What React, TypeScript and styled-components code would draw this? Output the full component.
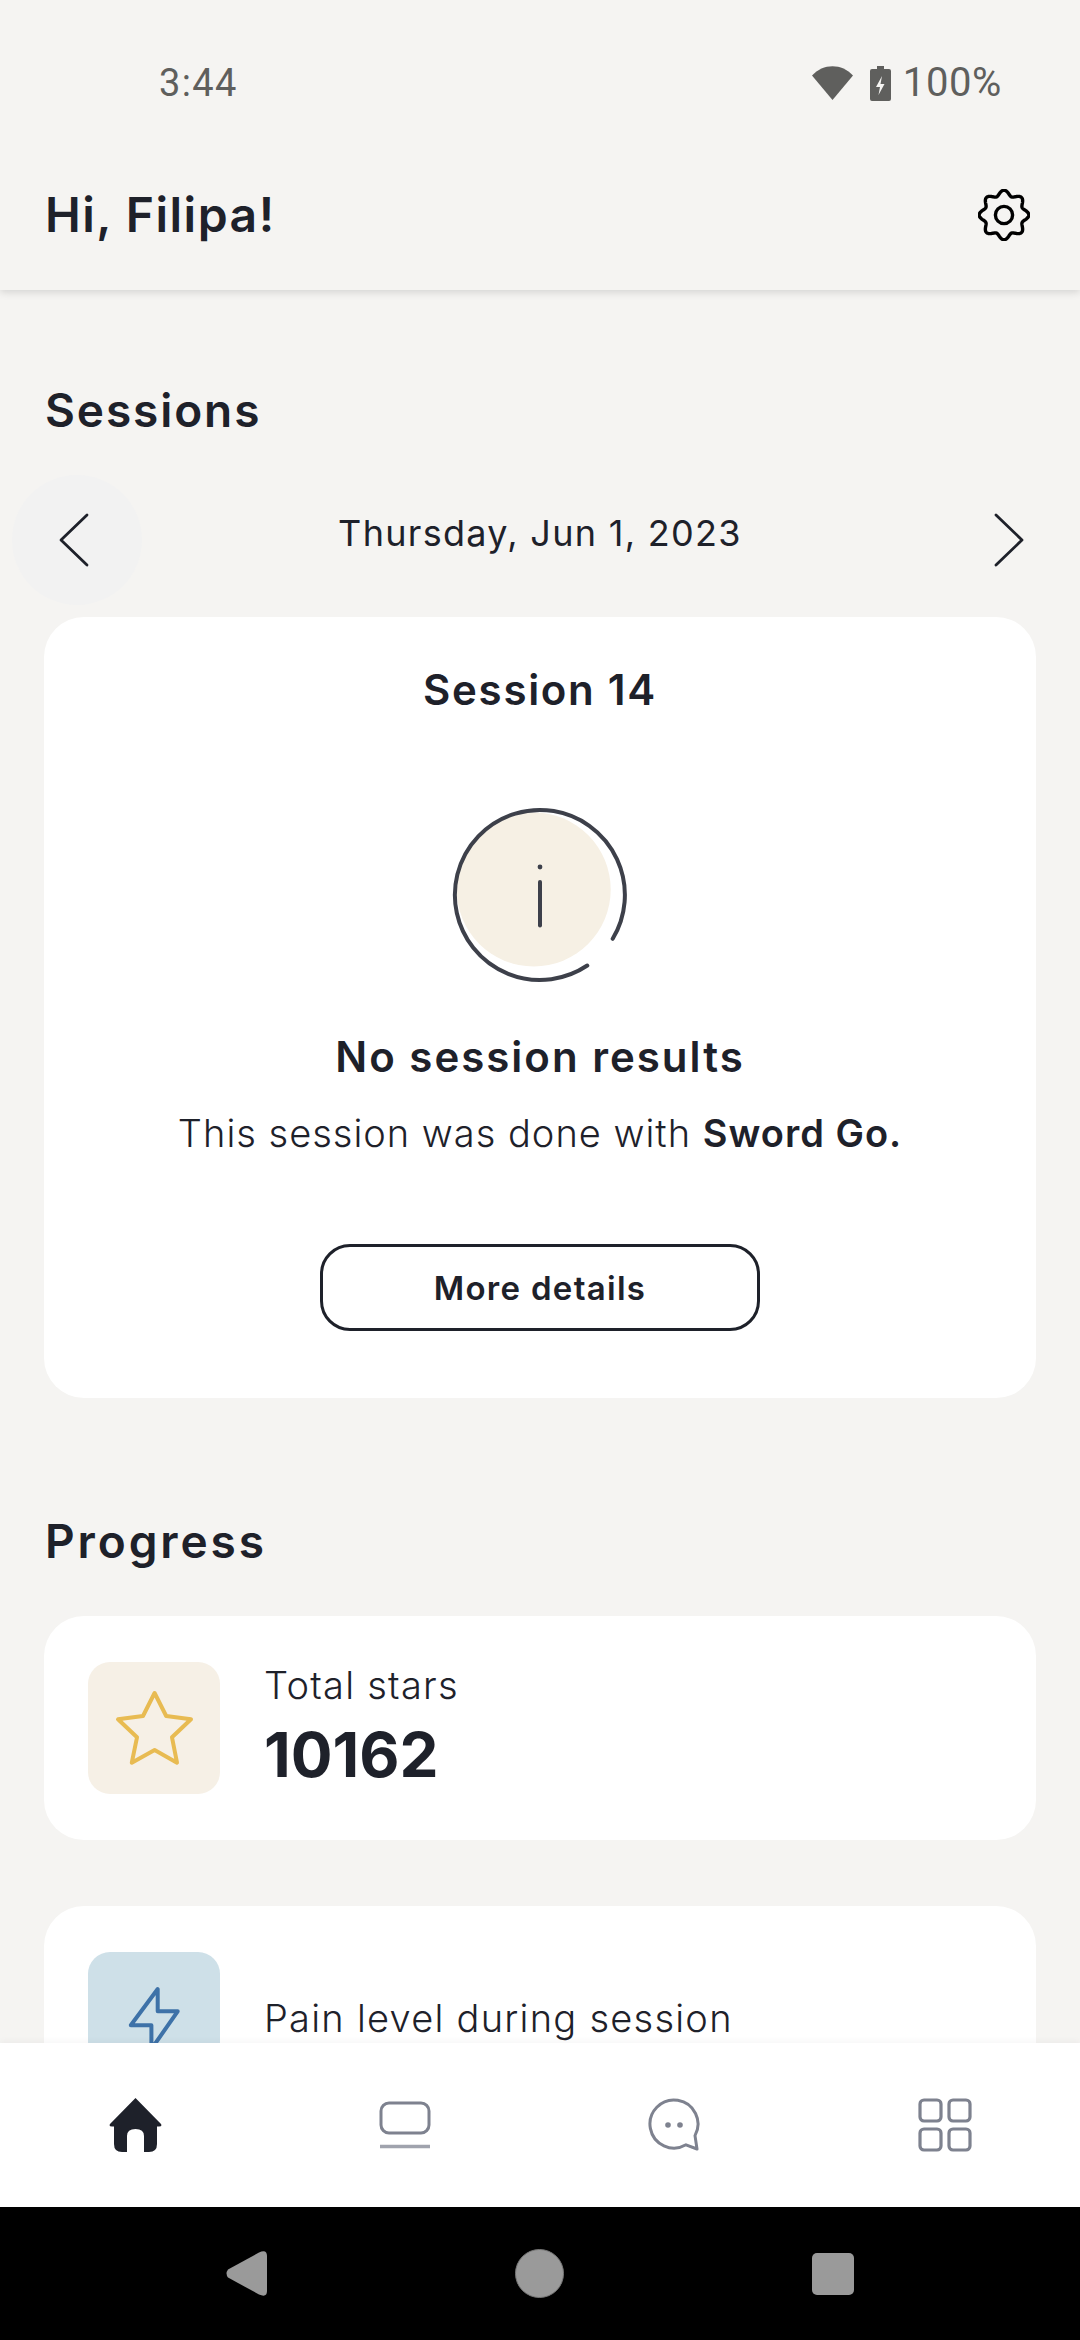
import { FC } from "react";
import styled, { createGlobalStyle } from "styled-components";

const colors = {
  page: "#f5f4f2",
  ink: "#1e212a",
  navGray: "#7e828f",
  status: "#5f5f5d",
  sysGray: "#9a9a9a",
};

const gearPath = () => {
  const points: string[] = [];
  for (let i = 0; i < 240; i++) {
    const a = (i / 240) * Math.PI * 2;
    const r = 22.2 + 2.6 * Math.cos(8 * a);
    const x = 26 + r * Math.sin(a);
    const y = 26 - r * Math.cos(a);
    points.push(`${x.toFixed(2)} ${y.toFixed(2)}`);
  }
  return `M${points.join("L")}Z`;
};

const WifiIcon: FC = () => (
  <svg width="41" height="34" viewBox="0 0 41 34">
    <path d="M0 9.5C11-3 30-3 41 9.5L20.5 34Z" fill={colors.status} />
  </svg>
);

const BatteryIcon: FC = () => (
  <svg width="21" height="35" viewBox="0 0 21 35">
    <path
      d="M7 0h7v3h5a2 2 0 0 1 2 2v28a2 2 0 0 1-2 2H2a2 2 0 0 1-2-2V5a2 2 0 0 1 2-2h5z"
      fill={colors.status}
    />
    <path d="M12 10l-6 11h4l-1.5 8 6-11h-4z" fill={colors.page} />
  </svg>
);

const GearIcon: FC = () => (
  <svg width="52" height="52" viewBox="0 0 52 52" fill="none" stroke="#000" strokeWidth="3.4">
    <path d={gearPath()} strokeLinejoin="round" />
    <circle cx="26" cy="26" r="8.6" />
  </svg>
);

const ChevronIcon: FC<{ left?: boolean }> = ({ left }) => (
  <svg width="30" height="54" viewBox="0 0 30 54" fill="none" stroke={colors.ink} strokeWidth="2.8" strokeLinecap="round" strokeLinejoin="round">
    <path d={left ? "M28 2L2 27l26 25" : "M2 2l26 25L2 52"} />
  </svg>
);

const InfoIcon: FC = () => (
  <svg width="180" height="180" viewBox="0 0 180 180" fill="none">
    <circle cx="83.7" cy="84.5" r="77" fill="#f6f0e4" />
    <path d="M137.3 160.5A85 85 0 1 1 162.7 133.8" stroke="#3d404a" strokeWidth="4" strokeLinecap="round" />
    <circle cx="90" cy="62" r="2.4" fill="#3d404a" />
    <path d="M90 77v43.5" stroke="#3d404a" strokeWidth="4" strokeLinecap="round" />
  </svg>
);

const StarIcon: FC = () => (
  <svg width="132" height="132" viewBox="0 0 132 132" fill="none" stroke="#e8bb52" strokeWidth="4" strokeLinejoin="round">
    <path d="M66.6 31L78.2 54 103 57.3 84 75.3 89 100.7 66.6 88 43.8 100.7 49 75.3 30 57.3 55 54Z" />
  </svg>
);

const BoltIcon: FC = () => (
  <svg width="132" height="132" viewBox="0 0 132 132" fill="none" stroke="#3e72a8" strokeWidth="4" strokeLinejoin="round">
    <path d="M69.7 37V59.3H89.7L63.4 97V73.3H42.8Z" />
  </svg>
);

const HomeIcon: FC = () => (
  <svg width="53" height="54" viewBox="0 0 53 54">
    <path
      d="M26.5 0L52 26Q53.5 28.5 50 28.5H48V46Q48 54 40 54H35V38Q35 31 26.5 31Q18 31 18 38V54H13Q5 54 5 46V28.5H3Q-.5 28.5 1 26Z"
      fill={colors.ink}
    />
  </svg>
);

const LessonsIcon: FC = () => (
  <svg width="52" height="48" viewBox="0 0 52 48" fill="none" stroke={colors.navGray} strokeWidth="3">
    <rect x="2" y="2" width="48" height="30" rx="8" />
    <path d="M1 45.5h50" stroke="#a0a3ad" strokeWidth="3.4" />
  </svg>
);

const ChatIcon: FC = () => (
  <svg width="54" height="54" viewBox="0 0 54 54" fill="none" stroke={colors.navGray} strokeWidth="3" strokeLinejoin="round">
    <path d="M38 46.8A24 24 0 1 1 47 37.6L49 51Z" />
    <circle cx="20" cy="27" r="2.8" fill={colors.navGray} stroke="none" />
    <circle cx="32" cy="27" r="2.8" fill={colors.navGray} stroke="none" />
  </svg>
);

const GridIcon: FC = () => (
  <svg width="54" height="54" viewBox="0 0 54 54" fill="none" stroke={colors.navGray} strokeWidth="3.2">
    <rect x="2" y="2" width="21" height="21" rx="4" />
    <rect x="31" y="2" width="21" height="21" rx="4" />
    <rect x="2" y="31" width="21" height="21" rx="4" />
    <rect x="31" y="31" width="21" height="21" rx="4" />
  </svg>
);

const SysBack: FC = () => (
  <svg width="41" height="45" viewBox="0 0 41 45">
    <path d="M2 18.5L33 1.5Q41-2 41 5V40Q41 47 33 43.5L2 26.5Q-1 22.5 2 18.5Z" fill={colors.sysGray} />
  </svg>
);

export default function App() {
  return (
    <>
      <GlobalStyle />
      <Screen>
        <TopBar>
          <StatusBar>
            <StatusTime>3:44</StatusTime>
            <StatusRight>
              <WifiIcon />
              <BatteryIcon />
              <StatusPercent>100%</StatusPercent>
            </StatusRight>
          </StatusBar>
          <Header>
            <Greeting>Hi, Filipa!</Greeting>
            <GearIcon />
          </Header>
        </TopBar>

        <Scroll>
          <SectionTitle $top={95} $spacing={1.9}>Sessions</SectionTitle>
          <DateRow>
            <RoundButton $pressed>
              <ChevronIcon left />
            </RoundButton>
            <DateLabel>Thursday, Jun 1, 2023</DateLabel>
            <RoundButton>
              <ChevronIcon />
            </RoundButton>
          </DateRow>

          <SessionCard>
            <SessionName>Session 14</SessionName>
            <InfoWrap>
              <InfoIcon />
            </InfoWrap>
            <NoResults>No session results</NoResults>
            <NoResultsText>
              This session was done with <b>Sword Go.</b>
            </NoResultsText>
            <OutlineButton>More details</OutlineButton>
          </SessionCard>

          <SectionTitle $top={118} $spacing={2.9}>Progress</SectionTitle>
          <ProgressList>
            <ProgressCard>
              <IconBox $bg="#f6f0e6">
                <StarIcon />
              </IconBox>
              <div>
                <StatLabel>Total stars</StatLabel>
                <StatValue>10162</StatValue>
              </div>
            </ProgressCard>
            <ProgressCard>
              <IconBox $bg="#cee0e8">
                <BoltIcon />
              </IconBox>
              <StatLabel>Pain level during session</StatLabel>
            </ProgressCard>
          </ProgressList>
        </Scroll>

        <BottomNav>
          <NavItem><HomeIcon /></NavItem>
          <NavItem><LessonsIcon /></NavItem>
          <NavItem><ChatIcon /></NavItem>
          <NavItem><GridIcon /></NavItem>
        </BottomNav>

        <SystemNav>
          <SysSlot><SysBack /></SysSlot>
          <SysSlot><SysHome /></SysSlot>
          <SysSlot><SysRecent /></SysSlot>
        </SystemNav>
      </Screen>
    </>
  );
}

const GlobalStyle = createGlobalStyle`
  html, body {
    margin: 0;
    padding: 0;
    background: ${colors.page};
  }
  * {
    box-sizing: border-box;
  }
`;

const Screen = styled.div`
  width: 1080px;
  height: 2340px;
  display: flex;
  flex-direction: column;
  overflow: hidden;
  background: ${colors.page};
  color: ${colors.ink};
  font-family: Inter, "Open Sans", sans-serif;
`;

const TopBar = styled.header`
  flex: none;
  position: relative;
  z-index: 2;
  background: ${colors.page};
  box-shadow: 0 2px 8px rgba(0, 0, 0, 0.14);
`;

const StatusBar = styled.div`
  height: 140px;
  padding: 63px 78px 0 159px;
  display: flex;
  justify-content: space-between;
  align-items: flex-start;
  font-family: Roboto, sans-serif;
  color: ${colors.status};
`;

const StatusTime = styled.span`
  font-size: 38px;
  line-height: 40px;
  letter-spacing: 1.4px;
`;

const StatusRight = styled.div`
  display: flex;
  align-items: center;
  height: 40px;
  svg:first-child {
    margin-right: 17px;
  }
`;

const StatusPercent = styled.span`
  margin-left: 12px;
  font-size: 40px;
  line-height: 40px;
  letter-spacing: 0.6px;
`;

const Header = styled.div`
  height: 150px;
  padding: 0 50px 0 45px;
  display: flex;
  justify-content: space-between;
  align-items: center;
`;

const Greeting = styled.h1`
  margin: 0;
  font-size: 48px;
  line-height: 50px;
  font-weight: 600;
  letter-spacing: 1.5px;
`;

const Scroll = styled.main`
  flex: 1;
  min-height: 0;
  overflow: hidden;
  padding: 0 44px;
`;

const SectionTitle = styled.h2<{ $top: number; $spacing: number }>`
  margin: ${(p) => p.$top}px 0 0 1px;
  font-size: 46px;
  line-height: 50px;
  font-weight: 600;
  letter-spacing: ${(p) => p.$spacing}px;
`;

const DateRow = styled.div`
  margin: 0 -38px 0 -32px;
  display: flex;
  justify-content: space-between;
  align-items: flex-start;
`;

const RoundButton = styled.div<{ $pressed?: boolean }>`
  width: 130px;
  height: 130px;
  margin-top: 40px;
  padding-right: ${(p) => (p.$pressed ? "6px" : "0")};
  border-radius: 50%;
  display: flex;
  align-items: center;
  justify-content: center;
  background: ${(p) => (p.$pressed ? "#f2f2f2" : "transparent")};
`;

const DateLabel = styled.div`
  margin-top: 76px;
  margin-right: 6px;
  font-size: 36px;
  line-height: 44px;
  font-weight: 400;
  letter-spacing: 1.3px;
`;

const SessionCard = styled.section`
  margin-top: 12px;
  padding: 48px 44px 67px;
  background: #fff;
  border-radius: 40px;
  display: flex;
  flex-direction: column;
  align-items: center;
`;

const SessionName = styled.div`
  font-size: 42px;
  line-height: 50px;
  font-weight: 600;
  letter-spacing: 1.7px;
`;

const InfoWrap = styled.div`
  margin-top: 90px;
  height: 180px;
`;

const NoResults = styled.div`
  margin-top: 47px;
  font-size: 42px;
  line-height: 50px;
  font-weight: 600;
  letter-spacing: 2px;
`;

const NoResultsText = styled.div`
  margin-top: 28px;
  font-size: 38px;
  line-height: 46px;
  font-weight: 300;
  letter-spacing: 1px;
  b {
    font-weight: 600;
  }
`;

const OutlineButton = styled.div`
  margin-top: 88px;
  width: 440px;
  height: 87px;
  border: 3px solid ${colors.ink};
  border-radius: 30px;
  display: flex;
  align-items: center;
  justify-content: center;
  font-size: 33px;
  font-weight: 600;
  letter-spacing: 1.3px;
`;

const ProgressList = styled.div`
  margin-top: 50px;
  display: flex;
  flex-direction: column;
  gap: 66px;
`;

const ProgressCard = styled.section`
  height: 224px;
  padding: 46px 44px;
  background: #fff;
  border-radius: 40px;
  display: flex;
  align-items: flex-start;
  gap: 44px;
`;

const IconBox = styled.div<{ $bg: string }>`
  flex: none;
  width: 132px;
  height: 132px;
  border-radius: 22px;
  background: ${(p) => p.$bg};
`;

const StatLabel = styled.div`
  font-size: 38px;
  line-height: 46px;
  font-weight: 300;
  letter-spacing: 1.25px;
  ${ProgressCard} > & {
    margin-top: 43px;
  }
`;

const StatValue = styled.div`
  margin-top: 7px;
  font-size: 62px;
  line-height: 80px;
  font-weight: 700;
`;

const BottomNav = styled.nav`
  flex: none;
  position: relative;
  z-index: 2;
  height: 164px;
  background: #fff;
  box-shadow: 0 -2px 6px rgba(0, 0, 0, 0.04);
  display: grid;
  grid-template-columns: repeat(4, 270px);
`;

const NavItem = styled.div`
  display: flex;
  align-items: center;
  justify-content: center;
`;

const SystemNav = styled.div`
  flex: none;
  position: relative;
  z-index: 2;
  height: 133px;
  background: #000;
  padding: 0 100px;
  display: grid;
  grid-template-columns: repeat(3, 1fr);
`;

const SysSlot = styled.div`
  display: flex;
  align-items: center;
  justify-content: center;
`;

const SysHome = styled.div`
  width: 49px;
  height: 49px;
  border-radius: 50%;
  background: ${colors.sysGray};
  border: 1px solid #777;
`;

const SysRecent = styled.div`
  width: 42px;
  height: 42px;
  border-radius: 5px;
  background: ${colors.sysGray};
`;
